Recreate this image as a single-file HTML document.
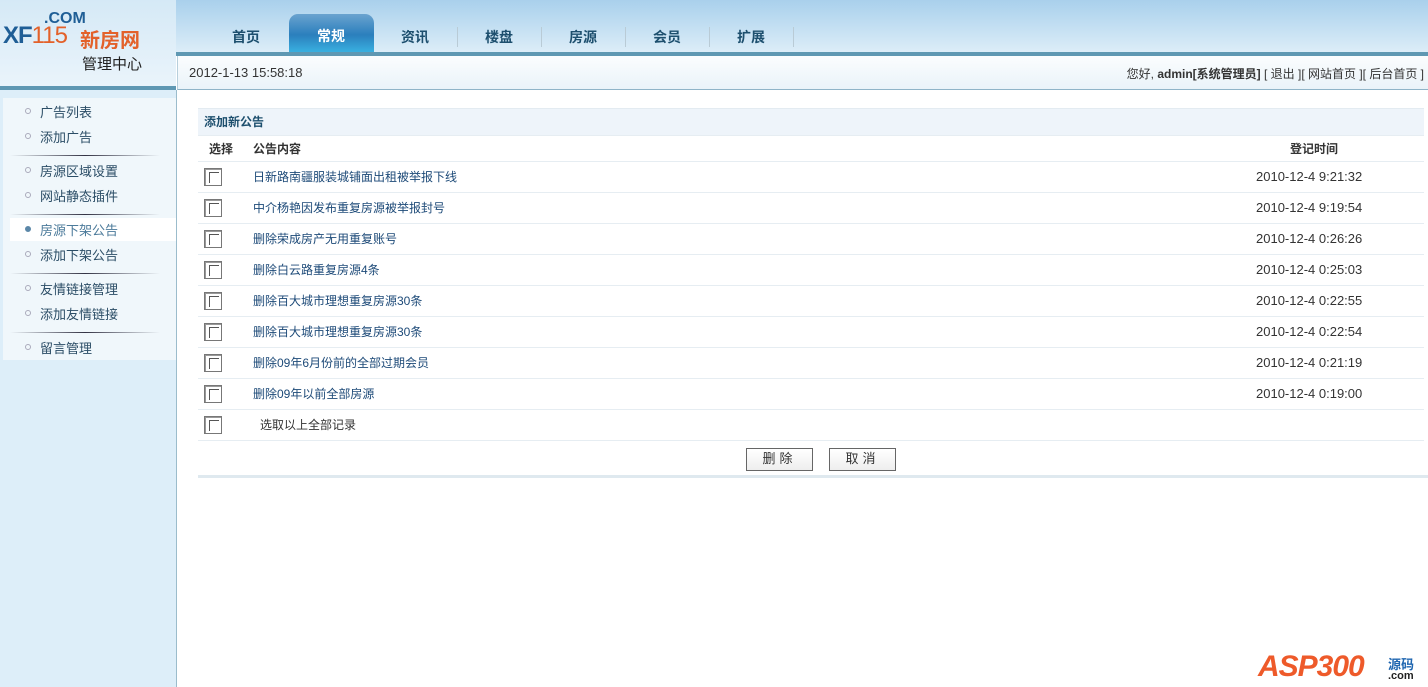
<!DOCTYPE html>
<html><head><meta charset="utf-8"><style>
*{margin:0;padding:0;box-sizing:border-box}
body{width:1428px;height:687px;overflow:hidden;font-family:"Liberation Sans","Noto Sans CJK SC",sans-serif;font-size:12px;color:#333;background:#fff;position:relative}
.hdr{position:absolute;left:0;top:0;width:1428px;height:52px;background:linear-gradient(#a9d0ec,#dcedf8)}
.logo{position:absolute;left:0;top:0;width:176px;height:86px;background:linear-gradient(#d5e9f6,#eaf4fb)}
.lbar{position:absolute;left:0;top:86px;width:176px;height:4px;background:#5f98b3}
.rbar{position:absolute;left:176px;top:52px;width:1252px;height:4px;background:#5f98b3}
.datebar{position:absolute;left:177px;top:56px;width:1251px;height:34px;background:linear-gradient(#fbfdfe,#eaf3f9);border-bottom:1px solid #8fb4c8;border-left:1px solid #b7cfdc}
.side{position:absolute;left:0;top:90px;width:176px;height:597px;background:#ddeef9}
.menu{position:absolute;left:3px;top:98px;width:173px;height:262px;background:#f0f7fb}
.mi{position:absolute;left:40px;font-size:13px;color:#2b4d66}
.dot{position:absolute;left:25px;width:6px;height:6px;border:1px solid #aab;border-radius:50%}
.sep{position:absolute;left:10px;width:150px;height:1px;background:linear-gradient(90deg,#f0f7fb,#334,#f0f7fb)}
.tab{position:absolute;top:27px;font-size:14px;font-weight:bold;color:#1d4f6e;width:84px;text-align:center}
.tsep{position:absolute;top:27px;width:1px;height:20px;background:#b9cbd6}
.main{position:absolute;left:176px;top:90px;width:1px;height:597px;background:#9bbccc}
table{position:absolute;left:198px;top:108px;width:1226px;border-collapse:collapse}
tr{height:31px}
td{border-bottom:1px solid #e6edf2;font-size:12px;padding-top:0;padding-bottom:0;line-height:16px}
.cb{display:inline-block;width:18px;height:18px;border:1px solid #777;background:#fff;box-shadow:inset 1px 1px 0 #999;margin-left:6px;vertical-align:middle;position:relative}
.cb:after{content:"";position:absolute;left:4px;top:3px;width:9px;height:10px;border-left:1px solid #555;border-top:1px solid #555}
a{color:#1d4a78;text-decoration:none}
.t{padding-left:2px;font-size:13px}
.btn{position:absolute;top:448px;width:67px;height:23px;border:1px solid #666;background:linear-gradient(#fff,#eee);text-align:center;line-height:20px;font-size:13px;letter-spacing:4px}
</style></head><body>
<div class="hdr"></div>
<div class="logo">
<div style="position:absolute;left:44px;top:10px;font:bold 16px 'Liberation Sans';color:#1f5e96">.COM</div>
<div style="position:absolute;left:3px;top:22px;font:bold 24px 'Liberation Sans';color:#1f5e96;letter-spacing:-1px">XF<span style="color:#e3612a;font-weight:normal">115</span></div>
<div style="position:absolute;left:80px;top:24px;font-size:20px;font-weight:bold;color:#e3612a">新房网</div>
<div style="position:absolute;left:82px;top:53px;font-size:15px;color:#222">管理中心</div>
</div>
<div class="lbar"></div><div class="rbar"></div>
<div style="position:absolute;left:289px;top:14px;width:85px;height:38px;border-radius:9px 9px 0 0;background:linear-gradient(#6aa3cf,#2b7fbd 55%,#39b0e0)"></div>
<div class="tab" style="left:204px">首页</div>
<div class="tab" style="left:289px;top:26px;color:#fff">常规</div>
<div class="tab" style="left:373px">资讯</div>
<div class="tab" style="left:457px">楼盘</div>
<div class="tab" style="left:541px">房源</div>
<div class="tab" style="left:625px">会员</div>
<div class="tab" style="left:709px">扩展</div>
<div class="tsep" style="left:457px"></div><div class="tsep" style="left:541px"></div><div class="tsep" style="left:625px"></div><div class="tsep" style="left:709px"></div><div class="tsep" style="left:793px"></div>
<div class="datebar">
<div style="position:absolute;left:11px;top:9px;font-size:13px;color:#333">2012-1-13 15:58:18</div>
<div style="position:absolute;right:4px;top:9px;font-size:12px;color:#333">您好, <b>admin[系统管理员]</b> [ 退出 ][ 网站首页 ][ 后台首页 ]</div>
</div>
<div class="side"></div>
<div class="menu"></div>
<div style="position:absolute;left:10px;top:218px;width:168px;height:23px;background:#fff"></div>
<div class="dot" style="top:108px"></div><div class="mi" style="top:102px">广告列表</div>
<div class="dot" style="top:133px"></div><div class="mi" style="top:127px">添加广告</div>
<div class="sep" style="top:155px"></div>
<div class="dot" style="top:167px"></div><div class="mi" style="top:161px">房源区域设置</div>
<div class="dot" style="top:192px"></div><div class="mi" style="top:186px">网站静态插件</div>
<div class="sep" style="top:214px"></div>
<div class="dot" style="top:226px;background:#5b87a8;border-color:#5b87a8"></div><div class="mi" style="top:220px;color:#4b7a9a">房源下架公告</div>
<div class="dot" style="top:251px"></div><div class="mi" style="top:245px">添加下架公告</div>
<div class="sep" style="top:273px"></div>
<div class="dot" style="top:285px"></div><div class="mi" style="top:279px">友情链接管理</div>
<div class="dot" style="top:310px"></div><div class="mi" style="top:304px">添加友情链接</div>
<div class="sep" style="top:332px"></div>
<div class="dot" style="top:344px"></div><div class="mi" style="top:338px">留言管理</div>
<div class="main"></div>
<table>
<tr style="height:27px"><td colspan="3" style="background:#eef4fa;border-top:1px solid #e3ebf1;font-weight:bold;color:#1d4f6e;padding-left:6px">添加新公告</td></tr>
<tr style="height:26px"><td style="width:48px;font-weight:bold;padding-left:11px">选择</td><td style="font-weight:bold;padding-left:7px">公告内容</td><td style="width:170px;font-weight:bold;padding-left:36px">登记时间</td></tr>
<tr><td><span class="cb"></span></td><td style="padding-left:7px"><a>日新路南疆服装城铺面出租被举报下线</a></td><td class="t">2010-12-4 9:21:32</td></tr>
<tr><td><span class="cb"></span></td><td style="padding-left:7px"><a>中介杨艳因发布重复房源被举报封号</a></td><td class="t">2010-12-4 9:19:54</td></tr>
<tr><td><span class="cb"></span></td><td style="padding-left:7px"><a>删除荣成房产无用重复账号</a></td><td class="t">2010-12-4 0:26:26</td></tr>
<tr><td><span class="cb"></span></td><td style="padding-left:7px"><a>删除白云路重复房源4条</a></td><td class="t">2010-12-4 0:25:03</td></tr>
<tr><td><span class="cb"></span></td><td style="padding-left:7px"><a>删除百大城市理想重复房源30条</a></td><td class="t">2010-12-4 0:22:55</td></tr>
<tr><td><span class="cb"></span></td><td style="padding-left:7px"><a>删除百大城市理想重复房源30条</a></td><td class="t">2010-12-4 0:22:54</td></tr>
<tr><td><span class="cb"></span></td><td style="padding-left:7px"><a>删除09年6月份前的全部过期会员</a></td><td class="t">2010-12-4 0:21:19</td></tr>
<tr><td><span class="cb"></span></td><td style="padding-left:7px"><a>删除09年以前全部房源</a></td><td class="t">2010-12-4 0:19:00</td></tr>
<tr><td><span class="cb"></span></td><td colspan="2" style="padding-left:14px">选取以上全部记录</td></tr>
</table>
<div class="btn" style="left:746px">删除</div>
<div class="btn" style="left:829px">取消</div>
<div style="position:absolute;left:198px;top:475px;width:1230px;height:3px;background:#dfe9ef"></div>
<div style="position:absolute;left:1258px;top:650px;font:italic bold 30px 'Liberation Sans';color:#ee5a2a;letter-spacing:-1px">ASP300</div>
<div style="position:absolute;left:1388px;top:654px;font-size:13px;font-weight:bold;color:#1f66b0">源码</div>
<div style="position:absolute;left:1388px;top:670px;font-size:11px;font-weight:bold;color:#222">.com</div>
</body></html>
